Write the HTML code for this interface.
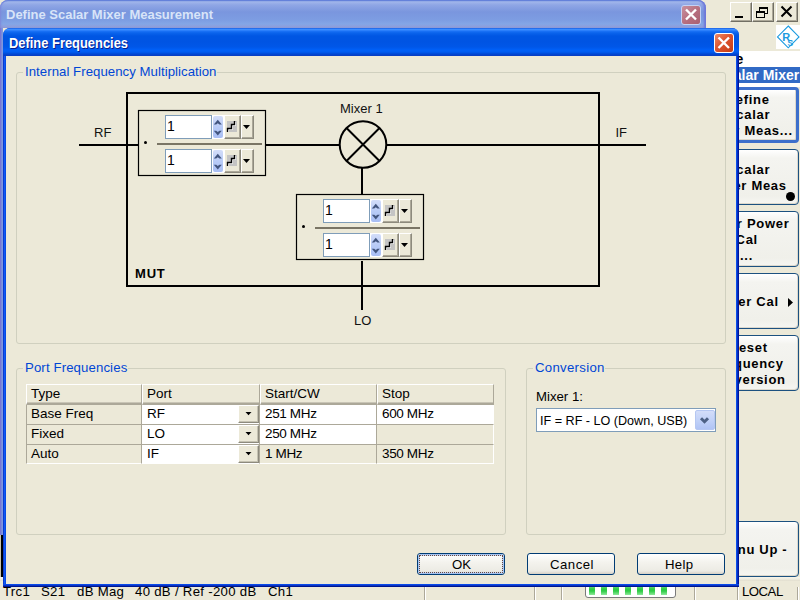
<!DOCTYPE html>
<html><head><meta charset="utf-8"><style>
*{margin:0;padding:0;box-sizing:border-box}
html,body{width:800px;height:600px;overflow:hidden;background:#ECE9D8;font-family:"Liberation Sans",sans-serif;position:relative}
.a{position:absolute}
.t{position:absolute;white-space:pre;color:#000}
.gb{position:absolute;border:1px solid #D0D0BF;border-radius:3px}
.cbtn{position:absolute;background:#ECE9D8;border-top:1px solid #fff;border-left:1px solid #fff;border-right:1px solid #716F64;border-bottom:1px solid #716F64;box-shadow:inset -1px -1px 0 #ACA899}
.sk{position:absolute;left:706px;width:93px;height:56px;border:1px solid #1C5180;border-radius:4px;background:linear-gradient(#FFFFFF,#F4F4F0 15%,#F0F0EA 85%,#F6F6F2);box-shadow:inset -1px -1px 0 #DCD8CC;overflow:hidden}
.xpbtn{position:absolute;height:22px;width:88px;border:1px solid #003C74;border-radius:3px;background:linear-gradient(#FFFFFF,#F4F3EE 40%,#ECEBE4 85%,#D6D0C5)}
.edit{position:absolute;background:#fff;border:1px solid #7F9DB9}
</style></head><body>
<div class="cbtn" style="left:730px;top:2px;width:22px;height:20px"></div>
<div class="a" style="left:735px;top:16px;width:8px;height:2px;background:#000"></div>
<div class="cbtn" style="left:752px;top:2px;width:22px;height:20px"></div>
<div class="a" style="left:759px;top:7px;width:9px;height:7px;border:1px solid #000;border-top-width:2px"></div>
<div class="a" style="left:756px;top:11px;width:9px;height:7px;border:1px solid #000;border-top-width:2px;background:#ECE9D8"></div>
<div class="cbtn" style="left:776px;top:2px;width:22px;height:20px"></div>
<svg class="a" style="left:776px;top:2px" width="22" height="20"><path d="M5.5 4.5 L15.5 14.5 M15.5 4.5 L5.5 14.5" stroke="#000" stroke-width="2"/></svg>
<div class="a" style="left:776px;top:25px;width:24px;height:24px;background:#fff"></div>
<svg class="a" style="left:776px;top:25px" width="24" height="24"><path d="M12.25 1 L23 11.9 L12.25 22.8 L1.5 11.9 Z" fill="none" stroke="#1A9BE0" stroke-width="1.1"/><text x="6.3" y="16" font-family="Liberation Sans" font-size="11" fill="#1A9BE0" font-weight="bold">R</text><text x="11.5" y="20.5" font-family="Liberation Sans" font-size="8.5" fill="#1A9BE0" font-weight="bold">S</text></svg>
<div class="a" style="left:706px;top:51px;width:94px;height:16px;background:#fff"></div>
<div class="t" style="right:56.80px;top:50.75px;font-size:14px;line-height:16px;font-weight:bold;color:#000;letter-spacing:0px;text-align:right">Define</div>
<div class="a" style="left:706px;top:67px;width:94px;height:16px;background:#316AC5"></div>
<div class="a" style="left:706px;top:83px;width:94px;height:4px;background:#fff"></div>
<div class="t" style="right:0.80px;top:66.75px;font-size:14px;line-height:16px;font-weight:bold;color:#fff;letter-spacing:0px;text-align:right">Scalar Mixer</div>
<div class="sk" style="top:87px;border:3px solid #3C6FCB"></div>
<div class="t" style="right:30.30px;top:91.50px;font-size:13px;line-height:15px;font-weight:bold;color:#000;letter-spacing:0.7px;text-align:right">Define</div>
<div class="t" style="right:29.80px;top:107.00px;font-size:13px;line-height:15px;font-weight:bold;color:#000;letter-spacing:0.7px;text-align:right">Scalar</div>
<div class="t" style="right:7.30px;top:123.00px;font-size:13px;line-height:15px;font-weight:bold;color:#000;letter-spacing:0.7px;text-align:right">Mixer Meas...</div>
<div class="sk" style="top:149px"></div>
<div class="t" style="right:29.80px;top:161.50px;font-size:13px;line-height:15px;font-weight:bold;color:#000;letter-spacing:0.7px;text-align:right">Scalar</div>
<div class="t" style="right:13.30px;top:177.50px;font-size:13px;line-height:15px;font-weight:bold;color:#000;letter-spacing:0.7px;text-align:right">Mixer Meas</div>
<div class="a" style="left:786px;top:192px;width:9px;height:9px;border-radius:50%;background:#000"></div>
<div class="sk" style="top:211px"></div>
<div class="t" style="right:10.60px;top:215.80px;font-size:13px;line-height:15px;font-weight:bold;color:#000;letter-spacing:0.7px;text-align:right">Mixer Power</div>
<div class="t" style="right:42.10px;top:231.50px;font-size:13px;line-height:15px;font-weight:bold;color:#000;letter-spacing:0.7px;text-align:right">Cal</div>
<div class="t" style="right:47.00px;top:248.00px;font-size:13px;line-height:15px;font-weight:bold;color:#000;letter-spacing:0.7px;text-align:right">...</div>
<div class="sk" style="top:273px"></div>
<div class="t" style="right:21.30px;top:293.50px;font-size:13px;line-height:15px;font-weight:bold;color:#000;letter-spacing:0.7px;text-align:right">Power Cal</div>
<svg class="a" style="left:788px;top:298px" width="6" height="9"><path d="M0 0 L5 4.5 L0 9 Z" fill="#000"/></svg>
<div class="sk" style="top:335px"></div>
<div class="t" style="right:32.30px;top:339.50px;font-size:13px;line-height:15px;font-weight:bold;color:#000;letter-spacing:0.7px;text-align:right">Preset</div>
<div class="t" style="right:16.30px;top:355.50px;font-size:13px;line-height:15px;font-weight:bold;color:#000;letter-spacing:0.7px;text-align:right">Frequency</div>
<div class="t" style="right:14.30px;top:371.50px;font-size:13px;line-height:15px;font-weight:bold;color:#000;letter-spacing:0.7px;text-align:right">Conversion</div>
<div class="sk" style="top:521px"></div>
<div class="t" style="right:12.60px;top:542.00px;font-size:13px;line-height:15px;font-weight:bold;color:#000;letter-spacing:0.7px;text-align:right">Menu Up -</div>
<div class="t" style="left:3px;top:584.13px;font-size:13.2px;line-height:15px;font-weight:normal;color:#000;letter-spacing:0.3px">Trc1</div>
<div class="t" style="left:41px;top:584.13px;font-size:13.2px;line-height:15px;font-weight:normal;color:#000;letter-spacing:0.3px">S21</div>
<div class="t" style="left:77px;top:584.13px;font-size:13.2px;line-height:15px;font-weight:normal;color:#000;letter-spacing:0.3px">dB Mag</div>
<div class="t" style="left:135px;top:584.13px;font-size:13.2px;line-height:15px;font-weight:normal;color:#000;letter-spacing:0.3px">40 dB / Ref -200 dB</div>
<div class="t" style="left:268px;top:584.13px;font-size:13.2px;line-height:15px;font-weight:normal;color:#000;letter-spacing:0.3px">Ch1</div>
<div class="a" style="left:585px;top:575px;width:91px;height:23px;border:1px solid #7A7A7A;border-radius:3px;background:#fff"></div>
<div class="a" style="left:589px;top:585px;width:6px;height:10px;background:linear-gradient(#8EE89A,#2ECC45 40%,#2ECC45 60%,#8EE89A)"></div>
<div class="a" style="left:601px;top:585px;width:6px;height:10px;background:linear-gradient(#8EE89A,#2ECC45 40%,#2ECC45 60%,#8EE89A)"></div>
<div class="a" style="left:613px;top:585px;width:6px;height:10px;background:linear-gradient(#8EE89A,#2ECC45 40%,#2ECC45 60%,#8EE89A)"></div>
<div class="a" style="left:625px;top:585px;width:6px;height:10px;background:linear-gradient(#8EE89A,#2ECC45 40%,#2ECC45 60%,#8EE89A)"></div>
<div class="a" style="left:637px;top:585px;width:6px;height:10px;background:linear-gradient(#8EE89A,#2ECC45 40%,#2ECC45 60%,#8EE89A)"></div>
<div class="a" style="left:649px;top:585px;width:6px;height:10px;background:linear-gradient(#8EE89A,#2ECC45 40%,#2ECC45 60%,#8EE89A)"></div>
<div class="a" style="left:661px;top:585px;width:6px;height:10px;background:linear-gradient(#8EE89A,#2ECC45 40%,#2ECC45 60%,#8EE89A)"></div>
<div class="a" style="left:0px;top:577px;width:800px;height:4px;background:linear-gradient(#F6F4EA,#F0EEE2 40%,#E2DECE)"></div>
<div class="a" style="left:425px;top:587px;width:1px;height:13px;background:#fff"></div>
<div class="a" style="left:424px;top:587px;width:1px;height:13px;background:#ACA899"></div>
<div class="a" style="left:535px;top:587px;width:1px;height:13px;background:#fff"></div>
<div class="a" style="left:534px;top:587px;width:1px;height:13px;background:#ACA899"></div>
<div class="a" style="left:562px;top:587px;width:1px;height:13px;background:#fff"></div>
<div class="a" style="left:561px;top:587px;width:1px;height:13px;background:#ACA899"></div>
<div class="a" style="left:695px;top:587px;width:1px;height:13px;background:#fff"></div>
<div class="a" style="left:694px;top:587px;width:1px;height:13px;background:#ACA899"></div>
<div class="a" style="left:738px;top:587px;width:1px;height:13px;background:#fff"></div>
<div class="a" style="left:737px;top:587px;width:1px;height:13px;background:#ACA899"></div>
<div class="a" style="left:798px;top:587px;width:1px;height:13px;background:#fff"></div>
<div class="a" style="left:797px;top:587px;width:1px;height:13px;background:#ACA899"></div>
<div class="t" style="left:742px;top:584.13px;font-size:13.2px;line-height:15px;font-weight:normal;color:#000;letter-spacing:-0.5px">LOCAL</div>
<div class="a" style="left:1px;top:535px;width:2px;height:42px;background:#000"></div>
<div class="a" style="left:0px;top:535px;width:1px;height:42px;background:#C8C4B0"></div>
<div class="a" style="left:0;top:0;width:706px;height:535px;background:#7B88D8;border-radius:8px 8px 0 0;overflow:hidden"><div class="a" style="left:0;top:0;width:706px;height:28px;background:linear-gradient(#6F8CDB 0px,#A0B5EA 2px,#8FA6E5 5px,#7A96DE 12px,#7D9DE2 20px,#84A6E6 24px,#8E9DDB 27px)"></div><div class="a" style="left:0;top:0;width:706px;height:28px;border-radius:8px 8px 0 0;box-shadow:inset -3px 0 2px -1px #6E76D8, inset 2px 0 2px -1px #7E88DA, inset 0 1px 0 #6482DC"></div><div class="a" style="left:0;top:28px;width:3px;height:507px;background:linear-gradient(90deg,#7676D6 0px,#7676D6 1px,#7A8ADA 1px,#7A8ADA 2px,#8096DE 2px)"></div><div class="a" style="left:3px;top:28px;width:700px;height:504px;background:#ECE9D8"></div></div>
<div class="t" style="left:5.5px;top:7.39px;font-size:13.6px;line-height:16px;font-weight:bold;color:#D8E4F8;transform:scaleX(0.955);transform-origin:0 0">Define Scalar Mixer Measurement</div>
<div class="a" style="left:681px;top:5px;width:20px;height:20px;border:1px solid #C4D2F4;border-radius:3px;background:linear-gradient(135deg,#C8909E,#B66E7E 55%,#AA6070)"></div>
<svg class="a" style="left:681px;top:5px" width="20" height="20"><path d="M5 4.5 L15 14.5 M15 4.5 L5 14.5" stroke="#fff" stroke-width="2.4"/></svg>
<div class="a" style="left:3px;top:28px;width:736px;height:559px;border-radius:7px 7px 0 0;background:#0842D8;overflow:hidden"><div class="a" style="left:0;top:0;width:736px;height:28px;background:linear-gradient(#0A4CDA 0px,#3C8FFF 1px,#3A8BFF 2px,#1C73F7 3px,#0A63EC 5px,#0056E3 8px,#0054E3 14px,#0057E8 19px,#0060F8 22px,#005CF0 24px,#0048D4 26px,#0A3CC0 28px)"></div><div class="a" style="left:0;top:28px;width:3px;height:531px;background:linear-gradient(90deg,#0A3AD0 0px,#0A3AD0 1px,#0C5AF6 1px,#0C5AF6 2px,#0848E4 2px)"></div><div class="a" style="left:733px;top:28px;width:3px;height:531px;background:linear-gradient(90deg,#0A4EEA 0px,#0A4EEA 1px,#0530C0 1px,#0530C0 2px,#00149A 2px)"></div><div class="a" style="left:0;top:556px;width:736px;height:3px;background:linear-gradient(#0A4AE8 0px,#0A4AE8 1px,#0832C4 1px,#0832C4 2px,#00168E 2px)"></div><div class="a" style="left:3px;top:28px;width:730px;height:528px;background:#ECE9D8"></div></div>
<div class="t" style="left:8.5px;top:36.12px;font-size:13.8px;line-height:16px;font-weight:bold;color:#fff;text-shadow:1px 1px 0 #0A1E8C;transform:scaleX(0.935);transform-origin:0 0">Define Frequencies</div>
<div class="a" style="left:714px;top:33px;width:20px;height:20px;border:1px solid #fff;border-radius:3px;background:linear-gradient(135deg,#EE8A66,#DD5530 45%,#C43C14)"></div>
<svg class="a" style="left:714px;top:33px" width="20" height="20"><path d="M4.5 4.5 L15 15 M15 4.5 L4.5 15" stroke="#fff" stroke-width="2.4"/></svg>
<div class="gb" style="left:16px;top:72px;width:710px;height:272px"></div>
<div class="a" style="left:23px;top:70px;width:194px;height:5px;background:#ECE9D8"></div>
<div class="t" style="left:25px;top:63.83px;font-size:13.2px;line-height:15px;font-weight:normal;color:#0046D5;letter-spacing:0.05px">Internal Frequency Multiplication</div>
<svg class="a" style="left:0;top:0" width="800" height="600">
  <g stroke="#000" fill="none">
    <rect x="127" y="93" width="472" height="193" stroke-width="2"/>
    <path d="M79 145 H138" stroke-width="2"/>
    <path d="M265 145 H339" stroke-width="2"/>
    <path d="M387 145 H646" stroke-width="2"/>
    <circle cx="363" cy="144.5" r="23.3" stroke-width="2"/>
    <path d="M346.5 128 L379.5 161 M379.5 128 L346.5 161" stroke-width="2"/>
    <path d="M362 168 V194" stroke-width="2"/>
    <path d="M362 261 V310" stroke-width="2"/>
    <rect x="138.5" y="110.5" width="127" height="65" stroke-width="1.2"/>
    <rect x="296.5" y="194.5" width="127" height="65" stroke-width="1.2"/>
  </g>
</svg>
<div class="t" style="left:94px;top:124.50px;font-size:13px;line-height:15px;font-weight:normal;color:#111;">RF</div>
<div class="t" style="left:615.5px;top:124.70px;font-size:13px;line-height:15px;font-weight:normal;color:#111;">IF</div>
<div class="t" style="left:340px;top:100.80px;font-size:13px;line-height:15px;font-weight:normal;color:#111;">Mixer 1</div>
<div class="t" style="left:354px;top:312.60px;font-size:13px;line-height:15px;font-weight:normal;color:#111;">LO</div>
<div class="t" style="left:135px;top:265.80px;font-size:13px;line-height:15px;font-weight:bold;color:#000;letter-spacing:0.8px">MUT</div>
<div class="a" style="left:138px;top:110px;width:127px;height:65px">
<div class="a" style="left:19px;top:33px;width:105px;height:2px;background:#7A7565"></div>
<div class="a" style="left:5.5px;top:31px;width:3px;height:3px;border-radius:50%;background:#000"></div>
<div class="a" style="left:27px;top:5px;width:47px;height:24px;background:#fff;border:1px solid #7F9DB9"></div>
<div class="a" style="left:74px;top:5px;width:12px;height:24px;background:#fff"></div>
<div class="a" style="left:75px;top:6px;width:10px;height:22px;border-radius:2px;background:linear-gradient(#D3DDF9,#B9CCF7 50%,#A8BEF4)"></div>
<svg class="a" style="left:75px;top:6px" width="10" height="22"><path d="M0.8 8.4 L4.8 3.8 L8.8 8.4 L6.4 8.4 L4.8 7.3 L3.2 8.4 Z M0.8 14.8 L4.8 19.4 L8.8 14.8 L6.4 14.8 L4.8 15.9 L3.2 14.8 Z" fill="#42557E"/></svg>
<div class="t" style="left:29px;top:8.15px;font-size:14px;line-height:16px;font-weight:normal;color:#000;">1</div>
<div class="a" style="left:86px;top:5px;width:17px;height:24px;background:#ECE9D8;border-top:1px solid #fff;border-left:1px solid #fff;border-right:1px solid #8D8A7D;border-bottom:1px solid #8D8A7D;box-shadow:inset -1px -1px 0 #ACA899"></div>
<div class="a" style="left:89px;top:11px;width:10px;height:11px;background:#C4C4C4"></div>
<svg class="a" style="left:86px;top:5px" width="17" height="24"><path d="M4.5 17 V14.5 H8.5 V10.5 H11.5 V7" stroke="#fff" stroke-width="1" fill="none"/><path d="M3.5 17 V13.5 H7.5 V9.5 H10.5 V6" stroke="#000" stroke-width="1.4" fill="none"/></svg>
<div class="a" style="left:103px;top:5px;width:13px;height:24px;background:#ECE9D8;border-top:1px solid #fff;border-left:1px solid #fff;border-right:1px solid #8D8A7D;border-bottom:1px solid #8D8A7D;box-shadow:inset -1px -1px 0 #ACA899"></div>
<svg class="a" style="left:103px;top:5px" width="13" height="24"><path d="M2 10 H9 L5.5 14 Z" fill="#000"/></svg>
<div class="a" style="left:27px;top:39px;width:47px;height:24px;background:#fff;border:1px solid #7F9DB9"></div>
<div class="a" style="left:74px;top:39px;width:12px;height:24px;background:#fff"></div>
<div class="a" style="left:75px;top:40px;width:10px;height:22px;border-radius:2px;background:linear-gradient(#D3DDF9,#B9CCF7 50%,#A8BEF4)"></div>
<svg class="a" style="left:75px;top:40px" width="10" height="22"><path d="M0.8 8.4 L4.8 3.8 L8.8 8.4 L6.4 8.4 L4.8 7.3 L3.2 8.4 Z M0.8 14.8 L4.8 19.4 L8.8 14.8 L6.4 14.8 L4.8 15.9 L3.2 14.8 Z" fill="#42557E"/></svg>
<div class="t" style="left:29px;top:42.15px;font-size:14px;line-height:16px;font-weight:normal;color:#000;">1</div>
<div class="a" style="left:86px;top:39px;width:17px;height:24px;background:#ECE9D8;border-top:1px solid #fff;border-left:1px solid #fff;border-right:1px solid #8D8A7D;border-bottom:1px solid #8D8A7D;box-shadow:inset -1px -1px 0 #ACA899"></div>
<div class="a" style="left:89px;top:45px;width:10px;height:11px;background:#C4C4C4"></div>
<svg class="a" style="left:86px;top:39px" width="17" height="24"><path d="M4.5 17 V14.5 H8.5 V10.5 H11.5 V7" stroke="#fff" stroke-width="1" fill="none"/><path d="M3.5 17 V13.5 H7.5 V9.5 H10.5 V6" stroke="#000" stroke-width="1.4" fill="none"/></svg>
<div class="a" style="left:103px;top:39px;width:13px;height:24px;background:#ECE9D8;border-top:1px solid #fff;border-left:1px solid #fff;border-right:1px solid #8D8A7D;border-bottom:1px solid #8D8A7D;box-shadow:inset -1px -1px 0 #ACA899"></div>
<svg class="a" style="left:103px;top:39px" width="13" height="24"><path d="M2 10 H9 L5.5 14 Z" fill="#000"/></svg>
</div>
<div class="a" style="left:296px;top:194px;width:127px;height:65px">
<div class="a" style="left:19px;top:33px;width:105px;height:2px;background:#7A7565"></div>
<div class="a" style="left:5.5px;top:31px;width:3px;height:3px;border-radius:50%;background:#000"></div>
<div class="a" style="left:27px;top:5px;width:47px;height:24px;background:#fff;border:1px solid #7F9DB9"></div>
<div class="a" style="left:74px;top:5px;width:12px;height:24px;background:#fff"></div>
<div class="a" style="left:75px;top:6px;width:10px;height:22px;border-radius:2px;background:linear-gradient(#D3DDF9,#B9CCF7 50%,#A8BEF4)"></div>
<svg class="a" style="left:75px;top:6px" width="10" height="22"><path d="M0.8 8.4 L4.8 3.8 L8.8 8.4 L6.4 8.4 L4.8 7.3 L3.2 8.4 Z M0.8 14.8 L4.8 19.4 L8.8 14.8 L6.4 14.8 L4.8 15.9 L3.2 14.8 Z" fill="#42557E"/></svg>
<div class="t" style="left:29px;top:8.15px;font-size:14px;line-height:16px;font-weight:normal;color:#000;">1</div>
<div class="a" style="left:86px;top:5px;width:17px;height:24px;background:#ECE9D8;border-top:1px solid #fff;border-left:1px solid #fff;border-right:1px solid #8D8A7D;border-bottom:1px solid #8D8A7D;box-shadow:inset -1px -1px 0 #ACA899"></div>
<div class="a" style="left:89px;top:11px;width:10px;height:11px;background:#C4C4C4"></div>
<svg class="a" style="left:86px;top:5px" width="17" height="24"><path d="M4.5 17 V14.5 H8.5 V10.5 H11.5 V7" stroke="#fff" stroke-width="1" fill="none"/><path d="M3.5 17 V13.5 H7.5 V9.5 H10.5 V6" stroke="#000" stroke-width="1.4" fill="none"/></svg>
<div class="a" style="left:103px;top:5px;width:13px;height:24px;background:#ECE9D8;border-top:1px solid #fff;border-left:1px solid #fff;border-right:1px solid #8D8A7D;border-bottom:1px solid #8D8A7D;box-shadow:inset -1px -1px 0 #ACA899"></div>
<svg class="a" style="left:103px;top:5px" width="13" height="24"><path d="M2 10 H9 L5.5 14 Z" fill="#000"/></svg>
<div class="a" style="left:27px;top:39px;width:47px;height:24px;background:#fff;border:1px solid #7F9DB9"></div>
<div class="a" style="left:74px;top:39px;width:12px;height:24px;background:#fff"></div>
<div class="a" style="left:75px;top:40px;width:10px;height:22px;border-radius:2px;background:linear-gradient(#D3DDF9,#B9CCF7 50%,#A8BEF4)"></div>
<svg class="a" style="left:75px;top:40px" width="10" height="22"><path d="M0.8 8.4 L4.8 3.8 L8.8 8.4 L6.4 8.4 L4.8 7.3 L3.2 8.4 Z M0.8 14.8 L4.8 19.4 L8.8 14.8 L6.4 14.8 L4.8 15.9 L3.2 14.8 Z" fill="#42557E"/></svg>
<div class="t" style="left:29px;top:42.15px;font-size:14px;line-height:16px;font-weight:normal;color:#000;">1</div>
<div class="a" style="left:86px;top:39px;width:17px;height:24px;background:#ECE9D8;border-top:1px solid #fff;border-left:1px solid #fff;border-right:1px solid #8D8A7D;border-bottom:1px solid #8D8A7D;box-shadow:inset -1px -1px 0 #ACA899"></div>
<div class="a" style="left:89px;top:45px;width:10px;height:11px;background:#C4C4C4"></div>
<svg class="a" style="left:86px;top:39px" width="17" height="24"><path d="M4.5 17 V14.5 H8.5 V10.5 H11.5 V7" stroke="#fff" stroke-width="1" fill="none"/><path d="M3.5 17 V13.5 H7.5 V9.5 H10.5 V6" stroke="#000" stroke-width="1.4" fill="none"/></svg>
<div class="a" style="left:103px;top:39px;width:13px;height:24px;background:#ECE9D8;border-top:1px solid #fff;border-left:1px solid #fff;border-right:1px solid #8D8A7D;border-bottom:1px solid #8D8A7D;box-shadow:inset -1px -1px 0 #ACA899"></div>
<svg class="a" style="left:103px;top:39px" width="13" height="24"><path d="M2 10 H9 L5.5 14 Z" fill="#000"/></svg>
</div>
<div class="gb" style="left:16px;top:368px;width:490px;height:167px"></div>
<div class="a" style="left:23px;top:366px;width:105px;height:5px;background:#ECE9D8"></div>
<div class="t" style="left:25px;top:359.83px;font-size:13.2px;line-height:15px;font-weight:normal;color:#0046D5;letter-spacing:0.12px">Port Frequencies</div>
<div class="a" style="left:26px;top:384px;width:116px;height:21px;background:#ECE9D8;border-top:1px solid #fff;border-left:1px solid #fff;border-bottom:2px solid #ACA899;border-right:1px solid #ACA899;box-shadow:inset 0 -1px 0 #C9C5B6"></div>
<div class="t" style="left:31px;top:385.92px;font-size:13.5px;line-height:16px;font-weight:normal;color:#000;">Type</div>
<div class="a" style="left:142px;top:384px;width:118px;height:21px;background:#ECE9D8;border-top:1px solid #fff;border-left:1px solid #fff;border-bottom:2px solid #ACA899;border-right:1px solid #ACA899;box-shadow:inset 0 -1px 0 #C9C5B6"></div>
<div class="t" style="left:147px;top:385.92px;font-size:13.5px;line-height:16px;font-weight:normal;color:#000;">Port</div>
<div class="a" style="left:260px;top:384px;width:117px;height:21px;background:#ECE9D8;border-top:1px solid #fff;border-left:1px solid #fff;border-bottom:2px solid #ACA899;border-right:1px solid #ACA899;box-shadow:inset 0 -1px 0 #C9C5B6"></div>
<div class="t" style="left:265px;top:385.92px;font-size:13.5px;line-height:16px;font-weight:normal;color:#000;">Start/CW</div>
<div class="a" style="left:377px;top:384px;width:117px;height:21px;background:#ECE9D8;border-top:1px solid #fff;border-left:1px solid #fff;border-bottom:2px solid #ACA899;border-right:1px solid #ACA899;box-shadow:inset 0 -1px 0 #C9C5B6"></div>
<div class="t" style="left:382px;top:385.92px;font-size:13.5px;line-height:16px;font-weight:normal;color:#000;">Stop</div>
<div class="a" style="left:26px;top:405px;width:116px;height:20px;background:#ECE9D8;border-bottom:1px solid #ACA899;border-right:1px solid #ACA899;border-left:1px solid #ACA899"></div>
<div class="t" style="left:31px;top:405.92px;font-size:13.5px;line-height:16px;font-weight:normal;color:#000;">Base Freq</div>
<div class="a" style="left:142px;top:405px;width:118px;height:20px;background:#fff;border-bottom:1px solid #ACA899;border-right:1px solid #ACA899;"></div>
<div class="t" style="left:147px;top:405.92px;font-size:13.5px;line-height:16px;font-weight:normal;color:#000;">RF</div>
<div class="a" style="left:260px;top:405px;width:117px;height:20px;background:#fff;border-bottom:1px solid #ACA899;border-right:1px solid #ACA899;"></div>
<div class="t" style="left:265px;top:405.92px;font-size:13.5px;line-height:16px;font-weight:normal;color:#000;letter-spacing:-0.35px">251 MHz</div>
<div class="a" style="left:377px;top:405px;width:117px;height:20px;background:#fff;border-bottom:1px solid #ACA899;border-right:1px solid #fff;"></div>
<div class="t" style="left:382px;top:405.92px;font-size:13.5px;line-height:16px;font-weight:normal;color:#000;letter-spacing:-0.35px">600 MHz</div>
<div class="a" style="left:238px;top:405px;width:21px;height:18px;background:#ECE9D8;border-top:1px solid #fff;border-left:1px solid #fff;border-right:1px solid #8D8A7D;border-bottom:1px solid #8D8A7D;box-shadow:inset -1px -1px 0 #C5C2B2"></div>
<svg class="a" style="left:238px;top:405px" width="21" height="18"><path d="M7.5 7 H13.5 L10.5 10.2 Z" fill="#000"/></svg>
<div class="a" style="left:26px;top:425px;width:116px;height:20px;background:#ECE9D8;border-bottom:1px solid #ACA899;border-right:1px solid #ACA899;border-left:1px solid #ACA899"></div>
<div class="t" style="left:31px;top:425.92px;font-size:13.5px;line-height:16px;font-weight:normal;color:#000;">Fixed</div>
<div class="a" style="left:142px;top:425px;width:118px;height:20px;background:#fff;border-bottom:1px solid #ACA899;border-right:1px solid #ACA899;"></div>
<div class="t" style="left:147px;top:425.92px;font-size:13.5px;line-height:16px;font-weight:normal;color:#000;">LO</div>
<div class="a" style="left:260px;top:425px;width:117px;height:20px;background:#fff;border-bottom:1px solid #ACA899;border-right:1px solid #ACA899;"></div>
<div class="t" style="left:265px;top:425.92px;font-size:13.5px;line-height:16px;font-weight:normal;color:#000;letter-spacing:-0.35px">250 MHz</div>
<div class="a" style="left:377px;top:425px;width:117px;height:20px;background:#ECE9D8;border-bottom:1px solid #ACA899;border-right:1px solid #fff;"></div>
<div class="t" style="left:382px;top:425.92px;font-size:13.5px;line-height:16px;font-weight:normal;color:#000;"></div>
<div class="a" style="left:238px;top:425px;width:21px;height:18px;background:#ECE9D8;border-top:1px solid #fff;border-left:1px solid #fff;border-right:1px solid #8D8A7D;border-bottom:1px solid #8D8A7D;box-shadow:inset -1px -1px 0 #C5C2B2"></div>
<svg class="a" style="left:238px;top:425px" width="21" height="18"><path d="M7.5 7 H13.5 L10.5 10.2 Z" fill="#000"/></svg>
<div class="a" style="left:26px;top:445px;width:116px;height:19px;background:#ECE9D8;border-bottom:1px solid #fff;border-right:1px solid #ACA899;border-left:1px solid #ACA899"></div>
<div class="t" style="left:31px;top:445.92px;font-size:13.5px;line-height:16px;font-weight:normal;color:#000;">Auto</div>
<div class="a" style="left:142px;top:445px;width:118px;height:19px;background:#fff;border-bottom:1px solid #fff;border-right:1px solid #ACA899;"></div>
<div class="t" style="left:147px;top:445.92px;font-size:13.5px;line-height:16px;font-weight:normal;color:#000;">IF</div>
<div class="a" style="left:260px;top:445px;width:117px;height:19px;background:#ECE9D8;border-bottom:1px solid #fff;border-right:1px solid #ACA899;"></div>
<div class="t" style="left:265px;top:445.92px;font-size:13.5px;line-height:16px;font-weight:normal;color:#000;letter-spacing:-0.35px">1 MHz</div>
<div class="a" style="left:377px;top:445px;width:117px;height:19px;background:#ECE9D8;border-bottom:1px solid #fff;border-right:1px solid #fff;"></div>
<div class="t" style="left:382px;top:445.92px;font-size:13.5px;line-height:16px;font-weight:normal;color:#000;letter-spacing:-0.35px">350 MHz</div>
<div class="a" style="left:238px;top:445px;width:21px;height:18px;background:#ECE9D8;border-top:1px solid #fff;border-left:1px solid #fff;border-right:1px solid #8D8A7D;border-bottom:1px solid #8D8A7D;box-shadow:inset -1px -1px 0 #C5C2B2"></div>
<svg class="a" style="left:238px;top:445px" width="21" height="18"><path d="M7.5 7 H13.5 L10.5 10.2 Z" fill="#000"/></svg>
<div class="gb" style="left:526px;top:368px;width:200px;height:167px"></div>
<div class="a" style="left:533px;top:366px;width:72px;height:5px;background:#ECE9D8"></div>
<div class="t" style="left:535px;top:359.83px;font-size:13.2px;line-height:15px;font-weight:normal;color:#0046D5;letter-spacing:0.3px">Conversion</div>
<div class="t" style="left:536px;top:388.93px;font-size:13.2px;line-height:15px;font-weight:normal;color:#000;">Mixer 1:</div>
<div class="a" style="left:536px;top:408px;width:180px;height:24px;background:#fff;border:1px solid #7F9DB9"></div>
<div class="a" style="left:695px;top:410px;width:20px;height:20px;border-radius:2px;background:linear-gradient(#D3DDF9,#C2D2F8 50%,#B0C4F5);border:1px solid #B5C7F2"></div>
<svg class="a" style="left:695px;top:410px" width="20" height="20"><path d="M6 8.2 L9.5 11.7 L13 8.2" stroke="#4D6185" stroke-width="3" fill="none"/></svg>
<div class="t" style="left:540px;top:413.63px;font-size:12.6px;line-height:14px;font-weight:normal;color:#000;">IF = RF - LO (Down, USB)</div>
<div class="xpbtn" style="left:417px;top:553px"></div>
<div class="a" style="left:418px;top:554px;width:86px;height:20px;border:1px solid #A8C4F0;border-radius:2px"></div>
<div class="a" style="left:419px;top:555px;width:84px;height:18px;border:1px solid #C6D8F6"></div>
<div class="a" style="left:419px;top:555px;width:84px;height:18px;border:1px dotted #6A4A3E"></div>
<div class="t" style="left:452px;top:556.73px;font-size:13.2px;line-height:15px;font-weight:normal;color:#000;letter-spacing:0px">OK</div>
<div class="xpbtn" style="left:527px;top:553px"></div>
<div class="t" style="left:550px;top:556.73px;font-size:13.2px;line-height:15px;font-weight:normal;color:#000;letter-spacing:0.5px">Cancel</div>
<div class="xpbtn" style="left:637px;top:553px"></div>
<div class="t" style="left:665px;top:556.73px;font-size:13.2px;line-height:15px;font-weight:normal;color:#000;letter-spacing:0.3px">Help</div>
</body></html>
